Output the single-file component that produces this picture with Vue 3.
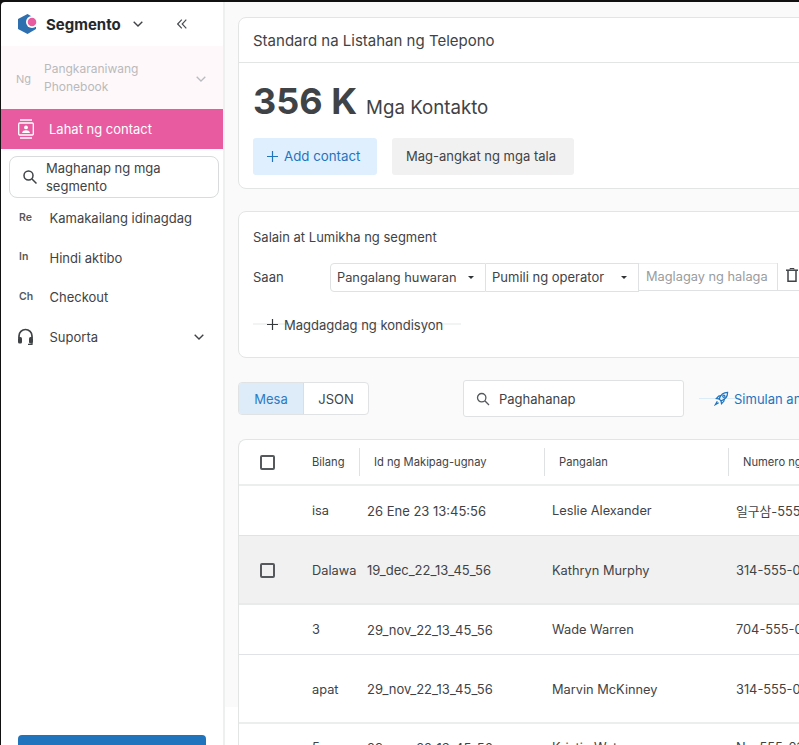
<script setup>
const rows = [
  { n: 'isa', id: '26 Ene 23 13:45:56', name: 'Leslie Alexander', tel: '일구삼-555-0142', cls: 'r1' },
  { n: 'Dalawa', id: '19_dec_22_13_45_56', name: 'Kathryn Murphy', tel: '314-555-0117', cls: 'r2', check: true },
  { n: '3', id: '29_nov_22_13_45_56', name: 'Wade Warren', tel: '704-555-0127', cls: 'r3' },
  { n: 'apat', id: '29_nov_22_13_45_56', name: 'Marvin McKinney', tel: '314-555-0117', cls: 'r4' },
  { n: '5', id: '29_nov_22_13_45_56', name: 'Kristin Watson', tel: 'Ng-555-0117', cls: 'r5' }
]
const navItems = [
  { tag: 'Re', label: 'Kamakailang idinagdag' },
  { tag: 'In', label: 'Hindi aktibo' },
  { tag: 'Ch', label: 'Checkout' }
]
</script>

<template>
  <div class="page">
    <aside class="side">
      <div class="brand">
        <svg class="logo" width="19" height="20" viewBox="0 0 19 20">
          <path d="M9.500 0 18 5v10l-8.500 5L0 15V5Z" fill="#2e6fb0" />
          <circle cx="14" cy="8" r="6" fill="#fff" />
          <circle cx="14" cy="8" r="4.300" fill="#e85ba1" />
        </svg>
        <span class="brand-name">Segmento</span>
        <svg class="brand-caret" width="10" height="6" viewBox="0 0 10 6"><path d="M.7.7 5 5 9.300.7" fill="none" stroke="#3f4346" stroke-width="1.400" /></svg>
        <svg class="collapse" width="10" height="10" viewBox="0 0 10 10"><path d="M4.800.7.7 5l4.100 4.300M9.300.7 5.200 5l4.100 4.300" fill="none" stroke="#4a4e52" stroke-width="1.200" /></svg>
      </div>
      <div class="book">
        <span class="book-tag">Ng</span>
        <span class="book-label">Pangkaraniwang Phonebook</span>
        <svg class="book-caret" width="10" height="6" viewBox="0 0 10 6"><path d="M.7.7 5 5 9.300.7" fill="none" stroke="#b9bcbf" stroke-width="1.300" /></svg>
      </div>
      <div class="active">
        <svg width="16" height="20" viewBox="0 0 16 20" fill="none" stroke="#fff" stroke-width="1.300">
          <path d="M2 1H14M2 19H14" />
          <rect x=".7" y="4" width="14.600" height="12" rx="1" />
          <circle cx="8" cy="8.400" r="1.900" fill="#fff" stroke="none" />
          <path d="M4 14c.4-2 2-2.700 4-2.700s3.600.7 4 2.700z" fill="#fff" stroke="none" />
        </svg>
        <span>Lahat ng contact</span>
      </div>
      <div class="seg-search">
        <svg width="16" height="16" viewBox="0 0 16 16" fill="none" stroke="#3f4346" stroke-width="1.500"><circle cx="6.500" cy="6.500" r="4.500" /><path d="M10 10 14.500 14.500" /></svg>
        <span>Maghanap ng mga segmento</span>
      </div>
      <div v-for="item in navItems" :key="item.tag" class="nav-item">
        <span class="nav-tag">{{ item.tag }}</span>
        <span>{{ item.label }}</span>
      </div>
      <div class="nav-item support">
        <svg class="head" width="17" height="18" viewBox="0 0 17 18">
          <path d="M2 10V8a6.500 6.500 0 0 1 13 0v2" fill="none" stroke="#3f4346" stroke-width="1.700" />
          <rect x="1" y="9" width="4" height="6.500" rx="1.500" fill="#3f4346" />
          <rect x="12" y="9" width="4" height="6.500" rx="1.500" fill="#3f4346" />
          <path d="M15 15v1.300h-4" fill="none" stroke="#3f4346" stroke-width="1.200" />
        </svg>
        <span class="grow">Suporta</span>
        <svg width="10" height="6" viewBox="0 0 10 6"><path d="M.7.7 5 5 9.300.7" fill="none" stroke="#3f4346" stroke-width="1.400" /></svg>
      </div>
      <div class="side-btn"></div>
    </aside>

    <main class="main">
      <section class="card head-card">
        <div class="card-title">Standard na Listahan ng Telepono</div>
        <div class="card-body">
          <div class="count"><b>356 K</b><span>Mga Kontakto</span></div>
          <div class="btns">
            <div class="btn btn-blue">
              <svg width="11" height="11" viewBox="0 0 11 11"><path d="M5.500 0v11M0 5.500h11" stroke="#1f74bd" stroke-width="1.200" /></svg>
              <span>Add contact</span>
            </div>
            <div class="btn btn-gray">Mag-angkat ng mga tala</div>
          </div>
        </div>
      </section>

      <section class="card filter-card">
        <div class="filter-title">Salain at Lumikha ng segment</div>
        <div class="where">
          <span class="where-label">Saan</span>
          <div class="sel sel1">Pangalang huwaran<i class="tri"></i></div>
          <div class="sel sel2">Pumili ng operator<i class="tri"></i></div>
          <div class="val">Maglagay ng halaga</div>
          <div class="trash">
            <svg width="12" height="14" viewBox="0 0 12 14" fill="none" stroke="#3f4346" stroke-width="1.500">
              <path d="M0 2.200h12" /><path d="M4 1.500V.5h4v1" stroke-width="1" /><path d="M2 2.500V13.200h8V2.500" />
            </svg>
          </div>
        </div>
        <div class="add-cond">
          <svg width="11" height="11" viewBox="0 0 11 11"><path d="M5.500 0v11M0 5.500h11" stroke="#35393c" stroke-width="1.200" /></svg>
          <span>Magdagdag ng kondisyon</span>
        </div>
      </section>

      <div class="tools">
        <div class="tabs"><span class="tab on">Mesa</span><span class="tab">JSON</span></div>
        <div class="search">
          <svg width="14" height="14" viewBox="0 0 14 14" fill="none" stroke="#55595c" stroke-width="1.300"><circle cx="5.700" cy="5.700" r="4.200" /><path d="M8.800 8.800 13 13" /></svg>
          <span>Paghahanap</span>
        </div>
        <div class="launch">
          <svg width="15" height="15" viewBox="0 0 16 16" fill="none" stroke="#1f74bd" stroke-width="1.300">
            <path d="M5.500 8.500C7 4 10 1.500 14.500 1.500 14.500 6 12 9 7.500 10.500Z" />
            <circle cx="10.500" cy="5.500" r="1.200" />
            <path d="M5.500 8.500 2.500 8 5 5.500 7.500 5M7.500 10.500 8 13.500 10.500 11 11 8.500M3.500 11 1.500 14.500 5 12.500" />
          </svg>
          <span>Simulan ang kampanya</span>
        </div>
      </div>

      <section class="table">
        <div class="thead">
          <div class="c-check"><i class="box"></i></div>
          <div class="th th-n">Bilang</div>
          <div class="th th-id">Id ng Makipag-ugnay</div>
          <div class="th th-name">Pangalan</div>
          <div class="th th-tel">Numero ng Telepono</div>
        </div>
        <div v-for="r in rows" :key="r.n" class="row" :class="r.cls">
          <div class="c-check"><i v-if="r.check" class="box"></i></div>
          <div class="td td-n">{{ r.n }}</div>
          <div class="td td-id">{{ r.id }}</div>
          <div class="td td-name">{{ r.name }}</div>
          <div class="td td-tel">{{ r.tel }}</div>
        </div>
      </section>
    </main>
  </div>
</template>

<style>
html, body { margin: 0; background: #fff; overflow: hidden; }
</style>

<style scoped>
.page {
  width: 799px; height: 745px; box-sizing: border-box; overflow: hidden; display: flex;
  border-top: 2px solid #111; border-left: 1px solid #111;
  font-family: Inter, "Noto Sans CJK KR", sans-serif; color: #3f4346; font-size: 13px;
  background: #111;
}
.side {
  width: 222px; flex: none; height: 743px; position: relative; background: #fff;
  border-right: 2px solid #eef0f0; border-top-left-radius: 4px;
}
.brand { height: 44px; display: flex; align-items: center; padding-left: 17px; }
.logo { margin-right: 9px; flex: none; }
.brand-name { font-size: 15px; font-weight: 700; color: #25282b; width: 80px; }
.brand-caret { margin-left: 7px; }
.collapse { margin-left: 34px; }
.book {
  height: 63px; background: #fff8fa; display: flex; align-items: center;
  padding: 0 17px 0 15px; color: #b8babc; box-sizing: border-box;
}
.book-tag { width: 28px; font-size: 11px; margin-top: 2px; }
.book-label { flex: 1; font-size: 12px; line-height: 18px; padding-right: 30px; }
.book-caret { margin-top: 2px; }
.active {
  height: 40px; background: #e85ba1; color: #fff; display: flex; align-items: center;
  padding-left: 17px; gap: 15px; font-size: 13px;
}
.seg-search {
  margin: 7px 4px .5px 8px; height: 42px; box-sizing: border-box; border: 1px solid #d8dcdc;
  border-radius: 8px; display: flex; align-items: center; padding: 0 12px; gap: 8px;
  font-size: 13px; line-height: 18px;
}
.seg-search span { width: 130px; }
.nav-item { height: 39.500px; display: flex; align-items: center; font-size: 13px; padding-left: 18px; }
.nav-tag { width: 30.500px; font-size: 10.500px; font-weight: 600; color: #55595c; margin-top: -2px; }
.support { padding-right: 19px; padding-left: 16px; }
.head { margin-right: 15.500px; }
.grow { flex: 1; }
.side-btn {
  position: absolute; left: 17px; width: 188px; top: 733px; height: 20px;
  background: #1f74bd; border-radius: 4px;
}
.main {
  flex: 1; min-width: 0; height: 743px; overflow: hidden; padding: 15px 0 0 13px; box-sizing: border-box;
  background: linear-gradient(#fafafa 705px, #fff 705px);
}
.card {
  width: 620px; background: #fff; border: 1px solid #e3e5e5; border-radius: 8px; box-sizing: border-box;
}
.head-card { height: 172px; }
.card-title {
  height: 45px; box-sizing: border-box; border-bottom: 1px solid #e3e5e5;
  padding: 0 14px; display: flex; align-items: center; font-size: 15px;
}
.card-body { padding: 14px 14px 0; }
.count { display: flex; align-items: baseline; gap: 9px; height: 48px; line-height: 48px; }
.count b { font-size: 36px; font-weight: 700; }
.count span { font-size: 18.700px; }
.btns { display: flex; gap: 15px; margin-top: 13px; }
.btn {
  height: 37px; border-radius: 3px; display: flex; align-items: center; box-sizing: border-box;
  font-size: 13px; padding-bottom: 2px;
}
.btn-blue { width: 124px; background: #e0effe; color: #1f74bd; gap: 6px; font-size: 13.300px; padding-left: 14px; }
.btn-blue svg { margin-top: 2px; }
.btn-gray { width: 182px; background: #f1f1f1; padding-left: 14px; }
.filter-card { height: 147px; margin-top: 22px; padding: 16px 14px 0; }
.filter-title { font-size: 13px; line-height: 18px; }
.where { display: flex; align-items: stretch; height: 29px; margin-top: 17px; font-size: 13px; }
.where-label { width: 77px; display: flex; align-items: center; font-size: 13px; padding-bottom: 1px; box-sizing: border-box; }
.sel {
  border: 1px solid #dfe2e2; display: flex; align-items: center; box-sizing: border-box; flex: none;
  padding: 0 0 1px 6px; position: relative; font-size: 12.800px;
}
.sel1 { width: 156px; border-radius: 4px 0 0 4px; }
.sel2 { width: 153px; border-left: 0; font-size: 13px; }
.tri {
  position: absolute; right: 11px; top: 12px; border: 3.500px solid transparent;
  border-top-color: #2f3336; border-bottom: 0;
}
.val {
  width: 138px; height: 28px; box-sizing: border-box; border-bottom: 1px solid #dfe2e2; flex: none;
  padding: 0 0 1px 7px; color: #9a9c9e; display: flex; align-items: center; font-size: 12.800px;
  border-top: 1px solid #eef0f0;
}
.trash {
  width: 30px; height: 28px; box-sizing: border-box; border-left: 1px solid #dfe2e2; flex: none;
  border-bottom: 1px solid #dfe2e2; padding: 5px 0 0 8px;
}
.add-cond {
  margin-top: 24px; width: 208px; height: 17px; display: flex; align-items: center; gap: 6px;
  padding-left: 14px; box-sizing: border-box; font-size: 13px;
  background: linear-gradient(transparent 7px, #f2f3f3 7px, #f2f3f3 9px, transparent 9px);
}
.tools { display: flex; align-items: center; height: 37px; margin-top: 22px; }
.tabs {
  display: flex; width: 131px; height: 33px; box-sizing: border-box; border: 1px solid #e0e3e3; flex: none;
  border-radius: 4px; overflow: hidden; background: #fff;
}
.tab { width: 65px; display: flex; align-items: center; justify-content: center; font-size: 13px; }
.tab.on { background: #deebf9; color: #2b7cc4; border-right: 1px solid #d5dfe8; }
.search {
  width: 221px; height: 37px; margin-left: 94px; box-sizing: border-box; background: #fff; flex: none;
  border: 1px solid #dfe2e2; border-radius: 3px; display: flex; align-items: center;
  padding-left: 12px; gap: 9px; font-size: 13px;
}
.launch {
  margin-left: 15px; width: 200px; height: 17px; flex: none; display: flex; align-items: center;
  padding-left: 15px; gap: 5px; box-sizing: border-box; color: #1f74bd; font-size: 13px; white-space: nowrap;
  background: linear-gradient(90deg, #dcebf8 38px, transparent 38px) 0 8px / 100% 1px no-repeat;
}
.table {
  width: 700px; margin-top: 22px; background: #fff; border: 1px solid #e3e5e5;
  border-right: 0; border-bottom: 0; border-radius: 8px 0 0 0;
}
.thead, .row { display: flex; align-items: center; box-sizing: border-box; }
.thead { height: 46px; border-bottom: 2px solid #eceeee; }
.c-check { width: 73px; flex: none; padding-left: 21px; box-sizing: border-box; display: flex; }
.box { width: 15px; height: 15px; box-sizing: border-box; border: 2px solid #55595c; border-radius: 2px; display: block; }
.th {
  font-size: 11.200px; height: 28px; display: flex; align-items: center; box-sizing: border-box;
  flex: none; white-space: nowrap;
}
.th-n { width: 47px; }
.th-id { width: 185px; border-left: 1px solid #dfe2e2; padding-left: 14px; }
.th-name { width: 184px; border-left: 1px solid #dfe2e2; padding-left: 14px; }
.th-tel { width: 240px; border-left: 1px solid #dfe2e2; padding-left: 14px; }
.row { border-bottom: 1px solid #e0e3e6; font-size: 12.800px; }
.r1, .r3 { height: 50px; }
.r2 { height: 69px; background: #f1f1f1; border-bottom: 2px solid #e9eaea; padding-top: 1px; }
.r4 { height: 69px; border-bottom: 2px solid #eceeee; padding-top: 1px; }
.r5 { height: 48px; }
.td { flex: none; white-space: nowrap; }
.td-n { width: 55px; }
.td-id { width: 185px; font-size: 13px; }
.td-name { width: 184px; }
.td-tel { width: 200px; }
</style>
